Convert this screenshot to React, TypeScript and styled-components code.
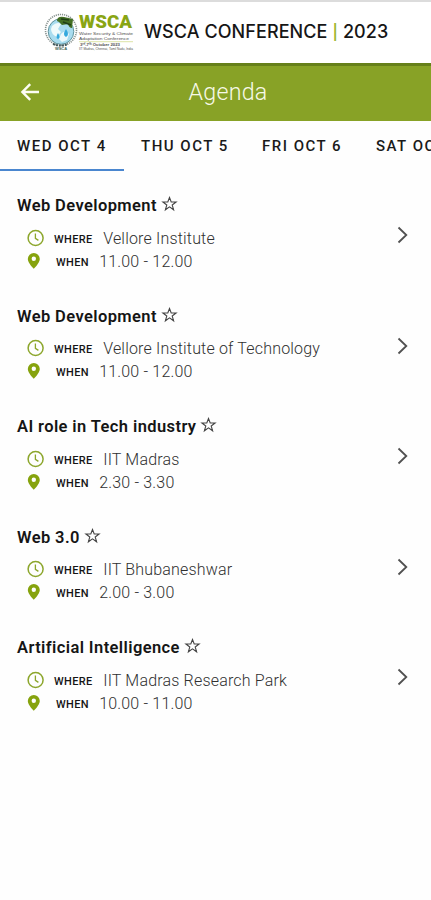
import React from "react";
import styled, { createGlobalStyle } from "styled-components";

const GlobalStyle = createGlobalStyle`
  * { box-sizing: border-box; }
  body { margin: 0; background: #fff; overflow: hidden; }
`;

const Screen = styled.div`
  width: 431px;
  height: 900px;
  overflow: hidden;
  background: #fefefe;
  color: #151515;
  font-family: Roboto, "Liberation Sans", sans-serif;
`;

const BrandBar = styled.header`
  display: flex;
  align-items: center;
  height: 63px;
  padding-left: 44px;
  border-top: 2px solid #dcdcdc;
  background: #fff;
`;

const Logo = styled.svg`
  display: block;
  width: 91px;
  height: 40px;
  margin-bottom: 2px;
  flex: none;
`;

const BrandName = styled.h1`
  display: flex;
  align-items: center;
  gap: 5px;
  margin: 0 0 2px 9px;
  font: 500 18px/24px Inter, sans-serif;
  letter-spacing: 0.08px;
  white-space: nowrap;
  color: #161616;
`;

const Divider = styled.span`
  font-size: 15px;
  font-weight: 600;
  color: #9db52f;
`;

const TitleBar = styled.div`
  display: grid;
  grid-template-columns: 60px 1fr 35px;
  align-items: center;
  height: 58px;
  padding-bottom: 4px;
  border-top: 3px solid #66801a;
  background: #88a226;
`;

const BackButton = styled.button`
  display: flex;
  width: 60px;
  height: 40px;
  padding: 0 0 0 20px;
  align-items: center;
  border: 0;
  background: none;
`;

const ScreenTitle = styled.h2`
  margin: 0;
  text-align: center;
  font-size: 23.2px;
  line-height: 30px;
  font-weight: 300;
  letter-spacing: 0.25px;
  color: #f7f9e8;
`;

const Tabs = styled.nav`
  display: flex;
  height: 50px;
`;

const Tab = styled.button<{ $width: number; $active?: boolean }>`
  flex: none;
  width: ${(p) => p.$width}px;
  height: 50px;
  padding: 2px 0 0 17px;
  border: 0;
  border-bottom: 2px solid ${(p) => (p.$active ? "#4a86cf" : "transparent")};
  background: none;
  text-align: left;
  white-space: nowrap;
  font: 500 15px/20px Roboto, sans-serif;
  letter-spacing: 1.5px;
  color: #1a1a1a;
`;

const Agenda = styled.main`
  padding-top: 23.4px;
`;

const Session = styled.article`
  display: grid;
  grid-template-columns: 1fr 42px;
  height: 110.5px;
  padding-left: 17px;
`;

const SessionTitle = styled.h3`
  display: flex;
  align-items: center;
  gap: 4px;
  height: 23px;
  margin: 0 0 9px;
  font-size: 16.5px;
  font-weight: 600;
  letter-spacing: 0.4px;
  white-space: nowrap;
`;

const Detail = styled.div`
  display: flex;
  align-items: center;
  height: 23px;
  padding-left: 10px;
`;

const IconSlot = styled.span`
  display: flex;
  width: 27px;
  flex: none;
`;

const Label = styled.span<{ $indent: number; $width: number }>`
  width: ${(p) => p.$width}px;
  padding: 3px 0 0 ${(p) => p.$indent}px;
  flex: none;
  font-size: 11px;
  font-weight: 500;
  letter-spacing: 0.35px;
`;

const Value = styled.span`
  padding-top: 0.4px;
  font-size: 16px;
  font-weight: 300;
  letter-spacing: 0.18px;
  white-space: nowrap;
  color: #303030;
`;

const OpenButton = styled.button`
  display: flex;
  align-items: center;
  align-self: start;
  height: 40px;
  margin-top: 21px;
  padding: 0 0 0 8px;
  border: 0;
  background: none;
`;

const Star = styled.svg`
  display: block;
  margin-bottom: 3px;
`;

const BrandLogo = () => (
  <Logo viewBox="0 0 91 40" fontFamily="Liberation Sans, sans-serif">
    <circle cx="17" cy="18" r="15.5" fill="none" stroke="#88928f" strokeWidth="1.6" strokeDasharray="1.2 0.9" />
    <circle cx="17" cy="19.5" r="12.8" fill="#a9dcef" stroke="#427c86" strokeWidth="0.8" />
    <path d="M8 14q5-5 9-2l-3 5 3 3-4 5q-6-3-6-8z" fill="#effafb" />
    <path d="M17 22q4-5 8 0l-2 6-5 2-3-3z" fill="#eef9fb" />
    <path d="M22 17q-4 6 0 8 4-2 0-8M14 21q-3 5 0 6 3-1 0-6" fill="#35a9dd" />
    <path d="M13 9q0-5 7-4l9 2-1 9q-3 0-4-4l-6 1-3-3z" fill="#436f24" />
    <path d="M17 7l8 1M19 10l8 3" stroke="#203f18" strokeWidth="1.4" />
    <path d="M9 32q8 3 15 0" fill="none" stroke="#44595c" strokeWidth="2" strokeDasharray="2 1" />
    <text x="17" y="37.5" textAnchor="middle" fontSize="4" fontWeight="700" fill="#465">WSCA</text>
    <text x="35" y="16" textLength="53" lengthAdjust="spacingAndGlyphs" fontSize="18.5" fontFamily="Roboto, sans-serif" fontWeight="900" fill="#89a514">WSCA</text>
    <path d="M35 29.7h54" stroke="#c5d16d" strokeWidth="0.6" />
    <g fontSize="4.3" fill="#4f4f4f">
      <text x="35" y="22.8" textLength="54" lengthAdjust="spacingAndGlyphs">Water Security &amp; Climate</text>
      <text x="35" y="27.8" textLength="50" lengthAdjust="spacingAndGlyphs">Adaptation Conference</text>
      <text x="36" y="34" fontWeight="700" textLength="40" lengthAdjust="spacingAndGlyphs">3ʳᵈ-7ᵗʰ October 2023</text>
      <text x="35" y="38.2" fontSize="3" textLength="54" lengthAdjust="spacingAndGlyphs">IIT Madras, Chennai, Tamil Nadu, India</text>
    </g>
  </Logo>
);

const BackIcon = () => (
  <svg width="20" height="18" viewBox="0 0 20 18" fill="none" stroke="#fcfdf4" strokeWidth="2.4">
    <path d="M19 9H3M10.2 1.2L2.4 9l7.8 7.8" />
  </svg>
);

const StarIcon = () => (
  <Star width="17" height="16" viewBox="0 0 17 16" fill="none" stroke="#444" strokeWidth="1.1">
    <path d="M8.5 1.5L10.2 6h4.9l-3.9 3 1.4 4.8-4.1-2.9-4.1 2.9L5.8 9 1.9 6h4.9z" />
  </Star>
);

const ClockIcon = () => (
  <svg width="18" height="18" viewBox="0 0 18 18" fill="none" stroke="#8ca62c" strokeWidth="1.5">
    <circle cx="8.6" cy="9" r="7.5" />
    <path d="M8.4 4.6v4.7l3 2.1" strokeWidth="1.3" />
  </svg>
);

const PinIcon = () => (
  <svg width="14" height="18" viewBox="0 0 14 18">
    <path fillRule="evenodd" d="M6.8 1A6 6 0 0 0 .8 6.9c0 4 6 9.8 6 9.8s6-5.8 6-9.8a6 6 0 0 0-6-5.9m0 3.6a2.2 2.2 0 1 1 0 4.4 2.2 2.2 0 0 1 0-4.4" fill="#86a30e" />
  </svg>
);

const ChevronIcon = () => (
  <svg width="12" height="18" viewBox="0 0 12 18" fill="none" stroke="#505050" strokeWidth="1.8">
    <path d="M1.5 1.5L9.3 9l-7.8 7.5" />
  </svg>
);

const sessions = [
  { title: "Web Development", where: "Vellore Institute", when: "11.00 - 12.00" },
  { title: "Web Development", where: "Vellore Institute of Technology", when: "11.00 - 12.00" },
  { title: "AI role in Tech industry", where: "IIT Madras", when: "2.30 - 3.30" },
  { title: "Web 3.0", where: "IIT Bhubaneshwar", when: "2.00 - 3.00" },
  { title: "Artificial Intelligence", where: "IIT Madras Research Park", when: "10.00 - 11.00" },
];

export default function App() {
  return (
    <Screen>
      <GlobalStyle />
      <BrandBar>
        <BrandLogo />
        <BrandName>
          <span>WSCA CONFERENCE</span>
          <Divider>|</Divider>
          <span>2023</span>
        </BrandName>
      </BrandBar>
      <TitleBar>
        <BackButton aria-label="Back"><BackIcon /></BackButton>
        <ScreenTitle>Agenda</ScreenTitle>
      </TitleBar>
      <Tabs>
        <Tab $width={124} $active>WED OCT 4</Tab>
        <Tab $width={121}>THU OCT 5</Tab>
        <Tab $width={114}>FRI OCT 6</Tab>
        <Tab $width={120}>SAT OCT 7</Tab>
      </Tabs>
      <Agenda>
        {sessions.map((s, i) => (
          <Session key={i}>
            <div>
              <SessionTitle>{s.title}<StarIcon /></SessionTitle>
              <Detail>
                <IconSlot><ClockIcon /></IconSlot>
                <Label $indent={0} $width={49.2}>WHERE</Label>
                <Value>{s.where}</Value>
              </Detail>
              <Detail>
                <IconSlot><PinIcon /></IconSlot>
                <Label $indent={2} $width={45.2}>WHEN</Label>
                <Value>{s.when}</Value>
              </Detail>
            </div>
            <OpenButton aria-label={`Open ${s.title}`}><ChevronIcon /></OpenButton>
          </Session>
        ))}
      </Agenda>
    </Screen>
  );
}
